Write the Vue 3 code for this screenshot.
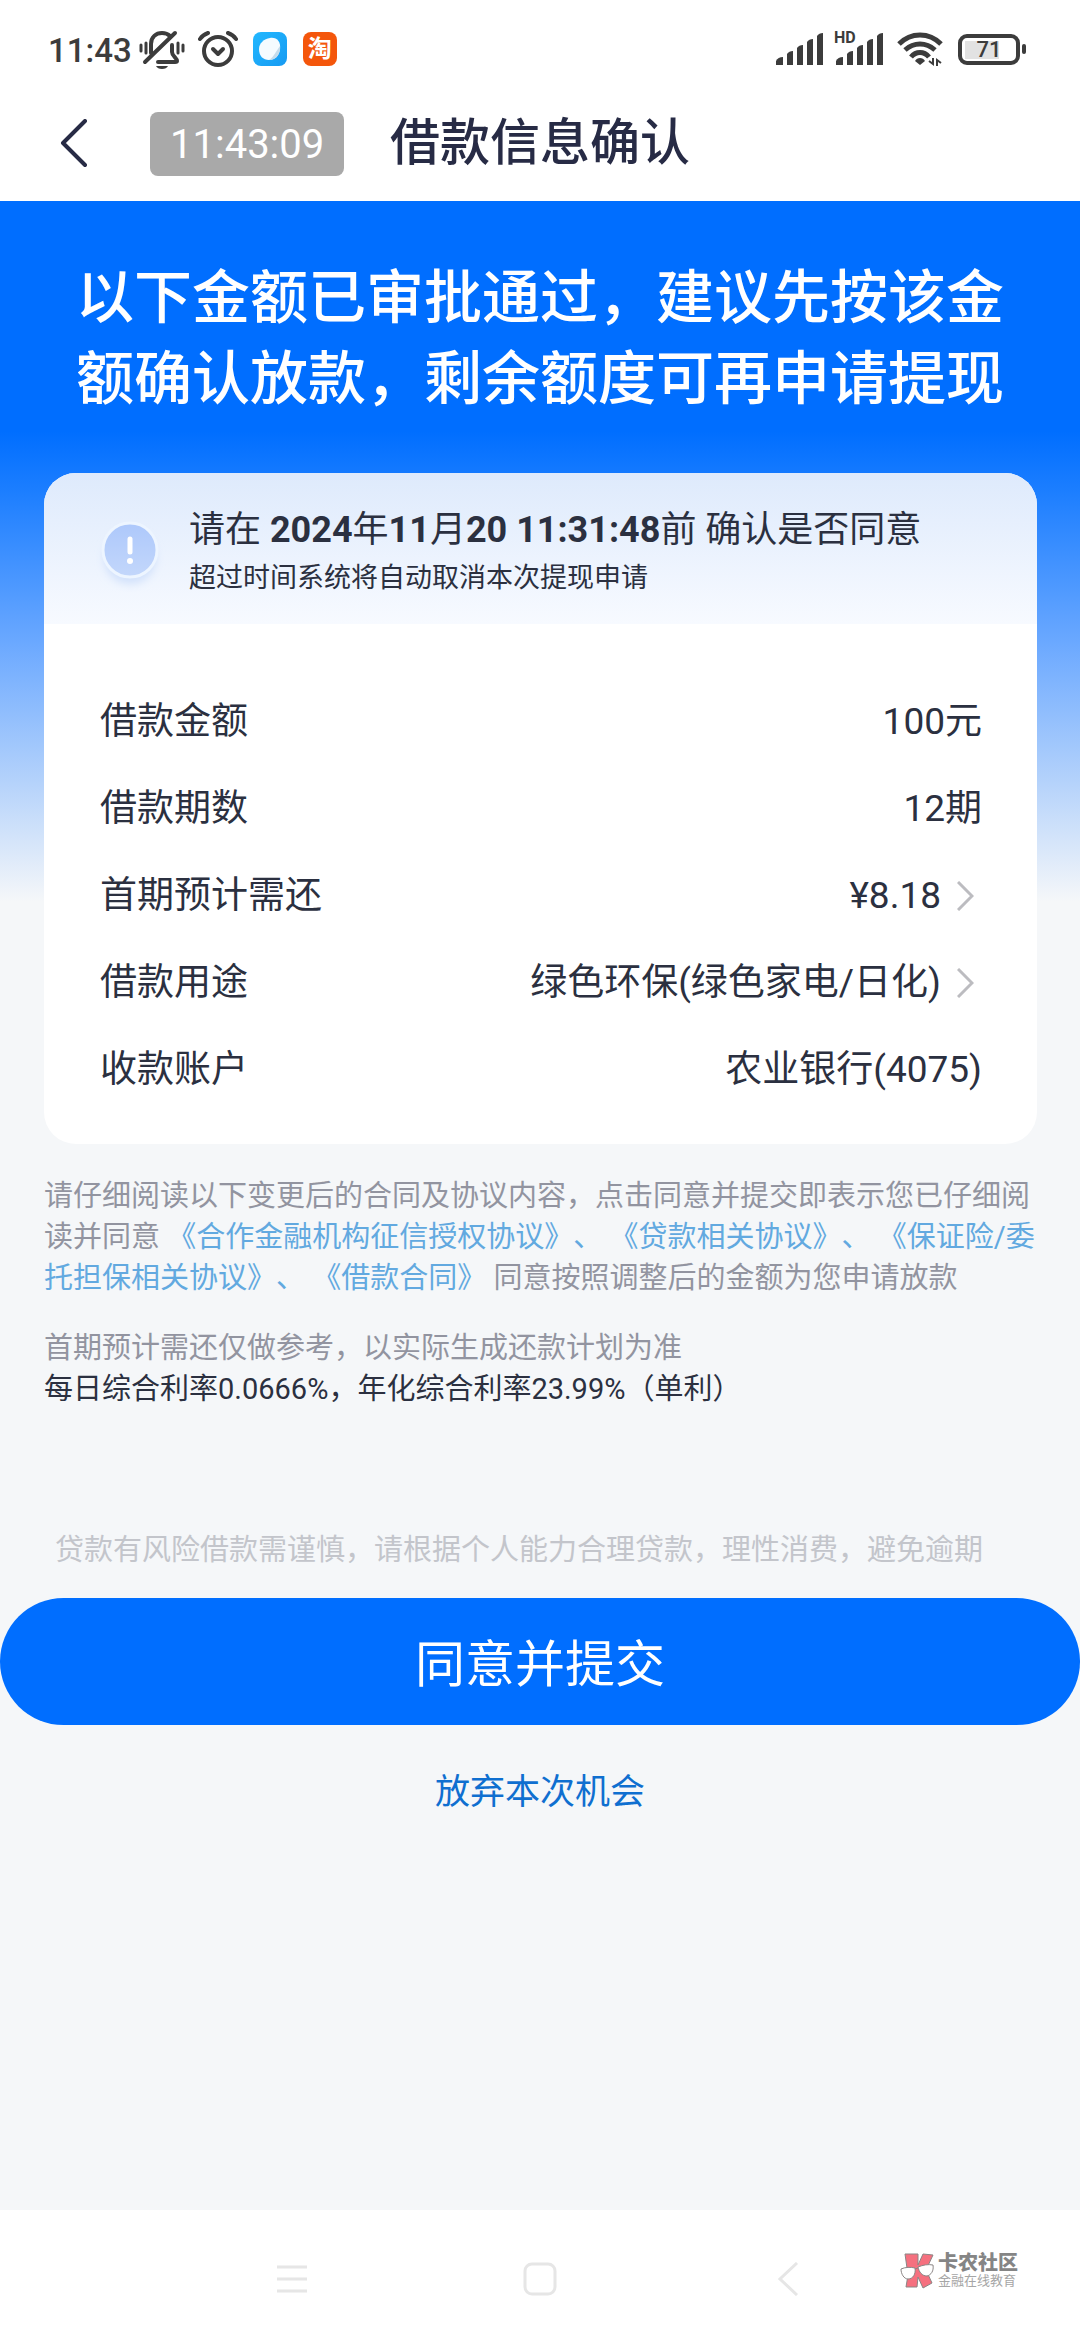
<template>
  <div class="page">
    <div class="status-bar">
      <div class="status-left">
        <span class="status-time">11:43</span>
        <svg class="icon-bell" width="46" height="40" viewBox="0 0 46 40" fill="none" stroke="#3c3c3c" stroke-linecap="round" stroke-linejoin="round">
          <path d="M12 24 V15 C12 8 17 4 23 4 C26 4 29 5 31 7" stroke-width="4" />
          <path d="M6 33 L36 4" stroke-width="4" />
          <path d="M33 16 V23 C33 27 38 29 38 32 C38 33 37 33 36 33 H19" stroke-width="4" />
          <path d="M2 16 V22 M7 14 V24 M39 14 V24 M44 16 V22" stroke-width="3" />
          <path d="M17 37 H29 C28 39 26 40 23 40 C20 40 18 39 17 37 Z" fill="#3c3c3c" stroke="none" />
        </svg>
        <svg class="icon-alarm" width="40" height="38" viewBox="0 0 40 38" fill="none" stroke="#3c3c3c" stroke-width="4" stroke-linecap="round">
          <circle cx="20" cy="21" r="14" />
          <path d="M2 9 C4 6 7 4 10 3 M30 3 C33 4 36 6 38 9" />
          <path d="M15 19 L20 24 L25 19" stroke-linejoin="round" />
        </svg>
        <svg class="icon-app" width="34" height="34" viewBox="0 0 34 34">
          <defs>
            <linearGradient id="app-tile" x1="0" y1="0" x2="1" y2="1">
              <stop offset="0" stop-color="#22b8ff" />
              <stop offset="1" stop-color="#169af2" />
            </linearGradient>
          </defs>
          <rect width="34" height="34" rx="8" fill="url(#app-tile)" />
          <path d="M17 6 C24 5 28 10 27 17 C26 24 22 28 16 28 C10 28 6 24 6 17 C6 11 11 7 17 6 Z" fill="#f4fbff" />
          <path d="M27 14 C28 22 23 28 16 28 C21 25 23 19 27 14 Z" fill="#c4dcec" />
        </svg>
        <span class="taobao">淘</span>
      </div>

      <div class="status-right">
        <svg width="48" height="32" viewBox="0 0 48 32" fill="#3c3c3c">
          <path v-for="bar in bars" :key="bar" :d="bar" />
        </svg>
        <div class="signal-hd">
          <svg width="48" height="32" viewBox="0 0 48 32" fill="#3c3c3c">
            <path v-for="bar in bars" :key="bar" :d="bar" />
          </svg>
          <span class="hd">HD</span>
        </div>
        <svg class="icon-wifi" width="46" height="36" viewBox="0 0 46 36" fill="none" stroke="#3c3c3c" stroke-width="5">
          <path d="M2 13 C14 1 32 1 44 13" />
          <path d="M8 19 C17 11 29 11 38 19" />
          <path d="M14 26 C19 20 27 20 32 26" />
          <path d="M18 30 C20 26 26 26 28 30 L23 34 Z" fill="#3c3c3c" stroke="none" />
          <path d="M36 27 V33 L32 30 M40 35 V29 L44 32" stroke-width="2" />
        </svg>
        <div class="battery">
          <span class="battery-body"><span class="battery-level">71</span></span>
          <span class="battery-cap"></span>
        </div>
      </div>
    </div>

    <header class="nav">
      <div class="nav-left">
        <button class="back" type="button" aria-label="返回">
          <svg width="28" height="50" viewBox="0 0 28 50" fill="none" stroke="#272b45" stroke-width="4" stroke-linecap="round" stroke-linejoin="round">
            <path d="M25 2 L3 24 L25 46" />
          </svg>
        </button>
        <span class="timestamp">11:43:09</span>
      </div>
      <h1 class="nav-title">借款信息确认</h1>
    </header>

    <main class="content">
      <p class="hero-text">以下金额已审批通过，建议先按该金<br>额确认放款，剩余额度可再申请提现</p>

      <section class="card">
        <div class="card-head">
          <svg class="icon-notice" width="72" height="80" viewBox="0 0 72 80">
            <defs>
              <linearGradient id="notice-disc" x1="0" y1="0" x2="0" y2="1">
                <stop offset="0" stop-color="#adc8fb" />
                <stop offset="1" stop-color="#c3d7fb" />
              </linearGradient>
              <filter id="notice-shadow" x="-30%" y="-30%" width="160%" height="160%">
                <feGaussianBlur stdDeviation="4" />
              </filter>
            </defs>
            <circle cx="36" cy="46" r="26" fill="#d2e1fb" filter="url(#notice-shadow)" />
            <circle cx="36" cy="38" r="27" fill="url(#notice-disc)" stroke="#edf5ff" stroke-width="3" />
            <path d="M36 27 V40" stroke="#fff" stroke-width="5" stroke-linecap="round" />
            <circle cx="36" cy="49" r="3" fill="#fff" />
          </svg>
          <div>
            <p class="notice-title">请在 <b>2024</b>年<b>11</b>月<b>20 11:31:48</b>前 确认是否同意</p>
            <p class="notice-sub">超过时间系统将自动取消本次提现申请</p>
          </div>
        </div>

        <dl class="rows">
          <div v-for="row in rows" :key="row.label" class="row">
            <dt>{{ row.label }}</dt>
            <dd>
              {{ row.value }}
              <svg v-if="row.arrow" class="arrow" width="17" height="30" viewBox="0 0 17 30" fill="none" stroke="#bcbcc0" stroke-width="3">
                <path d="M1 1 L15 15 L1 29" />
              </svg>
            </dd>
          </div>
        </dl>
      </section>

      <div class="terms">
        <p>请仔细阅读以下变更后的合同及协议内容，点击同意并提交即表示您已仔细阅读并同意 <a href="#">《合作金融机构征信授权协议》</a><i>、</i> <a href="#">《贷款相关协议》</a><i>、</i> <a href="#">《保证险/委托担保相关协议》</a><i>、</i> <a href="#">《借款合同》</a> 同意按照调整后的金额为您申请放款</p>
        <p class="terms-rate">首期预计需还仅做参考，以实际生成还款计划为准<br><strong>每日综合利率0.0666%，年化综合利率23.99%（单利）</strong></p>
      </div>

      <p class="risk">贷款有风险借款需谨慎，请根据个人能力合理贷款，理性消费，避免逾期</p>
      <button class="submit" type="button">同意并提交</button>
      <button class="cancel" type="button">放弃本次机会</button>
    </main>

    <footer class="system-nav">
      <button type="button" aria-label="菜单">
        <svg width="34" height="34" viewBox="0 0 34 34" stroke="#e6e6e6" stroke-width="3">
          <path d="M2 5 H32 M2 17 H32 M2 29 H32" />
        </svg>
      </button>
      <button type="button" aria-label="主页">
        <svg width="34" height="34" viewBox="0 0 34 34" fill="none" stroke="#e6e6e6" stroke-width="3">
          <rect x="2" y="2" width="30" height="30" rx="7" />
        </svg>
      </button>
      <button type="button" aria-label="后退">
        <svg width="34" height="34" viewBox="0 0 34 34" fill="none" stroke="#e6e6e6" stroke-width="3">
          <path d="M25 1 L8 17 L25 33" />
        </svg>
      </button>

      <div class="brand">
        <svg width="36" height="36" viewBox="0 0 36 36" stroke="#8b8585" stroke-width="1">
          <path d="M5 1 H18 V12 L23 1 L33 2 L26 17 L32 30 L23 35 L18 24 L17 34 H6 L8 22 Z" fill="#f5707f" />
          <path d="M1 16 C5 14 11 14 15 15 C16 21 13 26 8 26 C4 26 1 21 1 16 Z" fill="#fff" />
          <path d="M18 14 C23 12 28 11 33 12 C34 18 31 22 27 23 C22 23 19 19 18 14 Z" fill="#fff" />
          <path d="M15 16 L18 15" fill="none" />
        </svg>
        <div>
          <p class="brand-name">卡农社区</p>
          <p class="brand-sub">金融在线教育</p>
        </div>
      </div>
    </footer>
  </div>
</template>

<script setup>
const bars = [
  'M0 32 V28 Q2 24 7 24 V32 Z',
  'M11 32 V21 Q13 18 17 18 V32 Z',
  'M21 32 V15 Q23 12 27 12 V32 Z',
  'M31 32 V9 Q33 6 37 6 V32 Z',
  'M41 32 V3 Q43 0 47 0 V32 Z'
];

const rows = [
  { label: '借款金额', value: '100元' },
  { label: '借款期数', value: '12期' },
  { label: '首期预计需还', value: '¥8.18', arrow: true },
  { label: '借款用途', value: '绿色环保(绿色家电/日化)', arrow: true },
  { label: '收款账户', value: '农业银行(4075)' }
];
</script>

<style>
body {
  margin: 0;
  background: #f5f7f9;
}
</style>

<style scoped>
.page {
  display: flex;
  flex-direction: column;
  min-height: 100vh;
  background: #f5f7f9;
  color: #2b3040;
  font-family: Roboto, "Noto Sans CJK SC", sans-serif;
  text-spacing-trim: space-all;
}

p,
h1,
dl,
dd {
  margin: 0;
}

button {
  padding: 0;
  border: 0;
  background: none;
  font-family: inherit;
  cursor: pointer;
}

svg {
  display: block;
  flex: none;
}

/* Status bar */
.status-bar {
  display: flex;
  justify-content: space-between;
  align-items: center;
  height: 70px;
  padding: 14px 54px 0 48px;
  background: #fff;
}

.status-left,
.status-right {
  display: flex;
  align-items: center;
}

.status-time {
  padding-top: 2px;
  color: #3c3c3c;
  font-size: 33px;
  font-weight: 500;
}

.icon-bell {
  margin-left: 7px;
}

.icon-alarm {
  margin: 0 15px 0 13px;
}

.taobao {
  width: 34px;
  height: 34px;
  margin-left: 16px;
  border-radius: 8px;
  background: #f4560b;
  color: #fff;
  font-size: 24px;
  font-weight: 700;
  line-height: 34px;
  text-align: center;
}

.signal-hd {
  position: relative;
  margin: 0 13px 0 12px;
}

.hd {
  position: absolute;
  top: -2px;
  left: -2px;
  color: #3c3c3c;
  font-size: 16px;
  font-weight: 700;
  line-height: 14px;
}

.battery {
  display: flex;
  align-items: center;
  gap: 2px;
  margin-left: 15px;
}

.battery-body {
  box-sizing: border-box;
  width: 62px;
  height: 31px;
  padding: 3px;
  border: 4px solid #3c3c3c;
  border-radius: 9px;
}

.battery-level {
  display: block;
  background: linear-gradient(to right, #e2e2e2 71%, #fff 71%);
  color: #3c3c3c;
  font-size: 22px;
  font-weight: 500;
  line-height: 18px;
  text-align: center;
}

.battery-cap {
  width: 4px;
  height: 10px;
  border-radius: 2px;
  background: #3c3c3c;
}

/* Title bar */
.nav {
  display: grid;
  grid-template-columns: 1fr auto 1fr;
  align-items: center;
  height: 117px;
  background: #fff;
}

.nav-left {
  display: flex;
  align-items: center;
  gap: 62px;
  padding: 3px 0 0 60px;
}

.timestamp {
  padding: 2px 20px 0;
  border-radius: 8px;
  background: #a9a9a9;
  color: #fff;
  font-size: 40px;
  line-height: 62px;
}

.nav-title {
  color: #272b45;
  font-size: 50px;
  font-weight: 500;
  line-height: 72px;
}

/* Content */
.content {
  display: flex;
  flex: 1;
  flex-direction: column;
  padding-top: 57px;
  background: linear-gradient(to bottom, #006eff 0, #006eff 230px, #1c7eff 290px, #6aa8ff 440px, #b4d2fb 580px, #f5f7f9 700px);
}

.hero-text {
  color: #fff;
  font-size: 58px;
  font-weight: 500;
  line-height: 81px;
  text-align: center;
}

.card {
  margin: 53px 43px 0 44px;
  border-radius: 32px;
  background: #fff;
  overflow: hidden;
}

.card-head {
  display: flex;
  align-items: center;
  gap: 23px;
  height: 145px;
  padding: 6px 0 0 50px;
  background: linear-gradient(to bottom, #deeafc, #f7faff);
}

.notice-title {
  font-size: 36px;
  line-height: 52px;
}

.notice-sub {
  font-size: 27px;
  line-height: 44px;
}

.rows {
  padding: 54px 55px 31px 56px;
}

.row {
  display: flex;
  justify-content: space-between;
  align-items: center;
  font-size: 37px;
  line-height: 87px;
}

.row dd {
  display: flex;
  align-items: center;
}

.arrow {
  margin: 0 8px 0 16px;
}

.terms {
  padding: 32px 36px 0 44px;
  color: #9294a0;
  font-size: 29px;
  line-height: 41px;
}

.terms a,
.terms i {
  color: #62a9e0;
  font-style: normal;
  text-decoration: none;
}

.terms-rate {
  margin-top: 29px;
}

.terms-rate strong {
  color: #2b3040;
  font-weight: 400;
}

.risk {
  margin-top: 120px;
  padding-left: 55px;
  color: #c3c5cb;
  font-size: 29px;
  line-height: 41px;
}

.submit {
  margin-top: 27px;
  padding-top: 8px;
  border-radius: 64px;
  background: #006eff;
  color: #fff;
  font-size: 50px;
  line-height: 119px;
}

.cancel {
  align-self: center;
  margin-top: 42px;
  color: #0f6fd0;
  font-size: 35px;
  line-height: 52px;
}

/* System navigation */
.system-nav {
  position: relative;
  display: flex;
  justify-content: space-evenly;
  height: 78px;
  padding: 52px 60px 0;
  background: #fff;
}

.system-nav button {
  align-self: flex-start;
}

.brand {
  position: absolute;
  top: 43px;
  right: 62px;
  display: flex;
  align-items: center;
  gap: 2px;
  color: #858585;
}

.brand-name {
  font-size: 20px;
  font-weight: 900;
  line-height: 20px;
}

.brand-sub {
  font-size: 13px;
  line-height: 16px;
  color: #a6a6a6;
}
</style>
